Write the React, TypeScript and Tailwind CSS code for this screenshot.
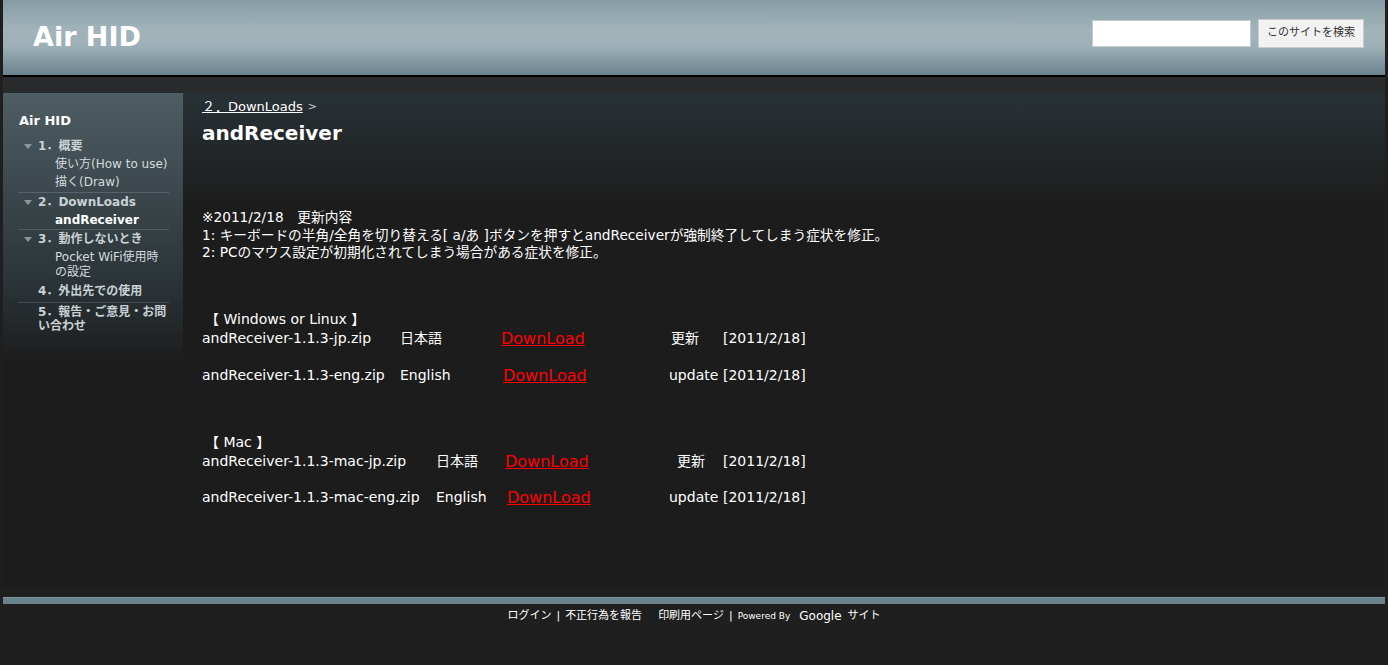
type Row = {
  file: string;
  lang: string;
  label: string;
  linkPad?: string;
  labelPad?: string;
};

const winRows: Row[] = [
  { file: "andReceiver-1.1.3-jp.zip", lang: "日本語", label: "更新", labelPad: "pl-[2px]" },
  { file: "andReceiver-1.1.3-eng.zip", lang: "English", label: "update", linkPad: "pl-[2px]" },
];

const macRows: Row[] = [
  { file: "andReceiver-1.1.3-mac-jp.zip", lang: "日本語", label: "更新", labelPad: "pl-[8px]" },
  { file: "andReceiver-1.1.3-mac-eng.zip", lang: "English", label: "update", linkPad: "pl-[2px]" },
];

function Arrow() {
  return (
    <svg width="8" height="5" viewBox="0 0 8 5" className="shrink-0">
      <path d="M0 0 H8 L4 5 Z" fill="#8c979c" />
    </svg>
  );
}

function Heading({ num, text, arrow = true }: { num: string; text: string; arrow?: boolean }) {
  return (
    <div className="flex items-start pt-[2px] pb-[1px] leading-[15px] whitespace-nowrap">
      <span className="flex h-[15px] w-[20px] items-center pl-[6px]">{arrow && <Arrow />}</span>
      <span className="font-bold text-[#c9d1d5]">
        {num}．{text}
      </span>
    </div>
  );
}

function Child({ lines, active = false }: { lines: string[]; active?: boolean }) {
  return (
    <div
      className={`pl-[37px] pt-[2px] pb-[1px] leading-[15px] whitespace-nowrap ${
        active ? "font-bold text-white" : "text-[#d3dadd]"
      }`}
    >
      {lines.map((l) => (
        <div key={l}>{l}</div>
      ))}
    </div>
  );
}

function Sidebar() {
  return (
    <aside className="w-[180px] shrink-0 bg-[linear-gradient(to_bottom,#4f5e64_0px,#3b474c_100px,#293135_200px,#1c1c1c_270px)] pl-[15px] pr-[14px] pt-[20px] text-[12px]">
      <div className="mb-[8px] pl-[1px] text-[13px] leading-[16px] font-bold text-white">Air HID</div>
      <Heading num="1" text="概要" />
      <Child lines={["使い方(How to use)"]} />
      <Child lines={["描く(Draw)"]} />
      <div className="mt-[1px] h-px bg-[#56656b]" />
      <Heading num="2" text="DownLoads" />
      <Child lines={["andReceiver"]} active />
      <div className="h-px bg-[#4f5d62]" />
      <Heading num="3" text="動作しないとき" />
      <Child lines={["Pocket WiFi使用時", "の設定"]} />
      <div className="pl-[20px] pt-[3px] pb-[1px] leading-[15px] font-bold text-[#c9d1d5]">4．外出先での使用</div>
      <div className="mt-[2px] h-px bg-[#434d51]" />
      <div className="pl-[20px] pt-[2px] leading-[14px] font-bold whitespace-nowrap text-[#c9d1d5]">
        <div>5．報告・ご意見・お問</div>
        <div>い合わせ</div>
      </div>
    </aside>
  );
}

function DownloadTable({
  title,
  rows,
  cols,
  gap,
}: {
  title: string;
  rows: Row[];
  cols: [string, string, string];
  gap: string;
}) {
  return (
    <div>
      <div className="pl-[3px] leading-[20px]">【 {title} 】</div>
      <div className={`flex flex-col ${gap}`}>
        {rows.map((r) => (
          <div key={r.file} className="flex h-[20px] items-center whitespace-nowrap">
            <span className={cols[0]}>{r.file}</span>
            <span className={cols[1]}>{r.lang}</span>
            <span className={`${cols[2]} ${r.linkPad ?? ""}`}>
              <a href="#" className="text-[16px] text-[#ff0000] underline">
                DownLoad
              </a>
            </span>
            <span className={`w-[54px] ${r.labelPad ?? ""}`}>{r.label}</span>
            <span>[2011/2/18]</span>
          </div>
        ))}
      </div>
    </div>
  );
}

export default function App() {
  return (
    <div className="min-h-[665px] bg-[#1f1f1f] px-[3px] font-['DejaVu_Sans','Noto_Sans_CJK_JP',sans-serif] text-white">
      <header className="flex h-[75px] items-start justify-between bg-[linear-gradient(to_bottom,#869ca5_0%,#a2b4ba_40%,#9db0b7_62%,#6b838e_100%)] pl-[30px] pr-[21px]">
        <h1 className="mt-[19px] text-[27px] leading-[36px] font-bold text-white">Air HID</h1>
        <div className="mt-[19px] flex items-center gap-[7px]">
          <input className="h-[27px] w-[159px] border border-[#c6c9ca] bg-white outline-none" />
          <button className="h-[29px] w-[106px] border border-[#c9cbcc] bg-[#f2f2f2] text-[11px] text-[#333]">
            このサイトを検索
          </button>
        </div>
      </header>
      <div className="h-[2px] bg-black" />
      <div className="h-[16px] bg-[#2a2b2d]" />
      <div className="flex h-[494px]">
        <Sidebar />
        <main className="flex-1 bg-[linear-gradient(to_bottom,#283236_0px,#222628_60px,#1c1c1c_115px)] pl-[19px] pt-[6px]">
          <div className="flex items-center gap-[5px] text-[13px] leading-[16px]">
            <a href="#" className="text-white underline">
              ２．DownLoads
            </a>
            <span className="text-[11px] text-[#c8c8c8]">&gt;</span>
          </div>
          <h2 className="mt-[6px] text-[20px] leading-[24px] font-bold">andReceiver</h2>
          <div className="mt-[64px] text-[13.7px] leading-[17.5px]">
            <div>※2011/2/18　更新内容</div>
            <div>1: キーボードの半角/全角を切り替える[ a/あ ]ボタンを押すとandReceiverが強制終了してしまう症状を修正。</div>
            <div>2: PCのマウス設定が初期化されてしまう場合がある症状を修正。</div>
          </div>
          <div className="mt-[47px] text-[14px]">
            <DownloadTable
              title="Windows or Linux"
              rows={winRows}
              cols={["w-[198px]", "w-[101px]", "w-[168px]"]}
              gap="gap-[17px]"
            />
          </div>
          <div className="mt-[46px] text-[14px]">
            <DownloadTable
              title="Mac"
              rows={macRows}
              cols={["w-[234px]", "w-[69px]", "w-[164px]"]}
              gap="gap-[16px]"
            />
          </div>
        </main>
      </div>
      <div className="mt-[10px] h-[7px] border-t border-[#7d949d] bg-[#6b838d]" />
      <footer className="mt-[5px] flex items-center justify-center text-[11px] leading-[14px] text-white">
        <a href="#">ログイン</a>
        <span className="mx-[5px]">|</span>
        <a href="#">不正行為を報告</a>
        <span className="w-[16px]" />
        <a href="#">印刷用ページ</a>
        <span className="mx-[5px]">|</span>
        <span className="text-[9px]">Powered By</span>
        <span className="ml-[9px] text-[12px]">Google</span>
        <span className="ml-[6px]">サイト</span>
      </footer>
    </div>
  );
}
